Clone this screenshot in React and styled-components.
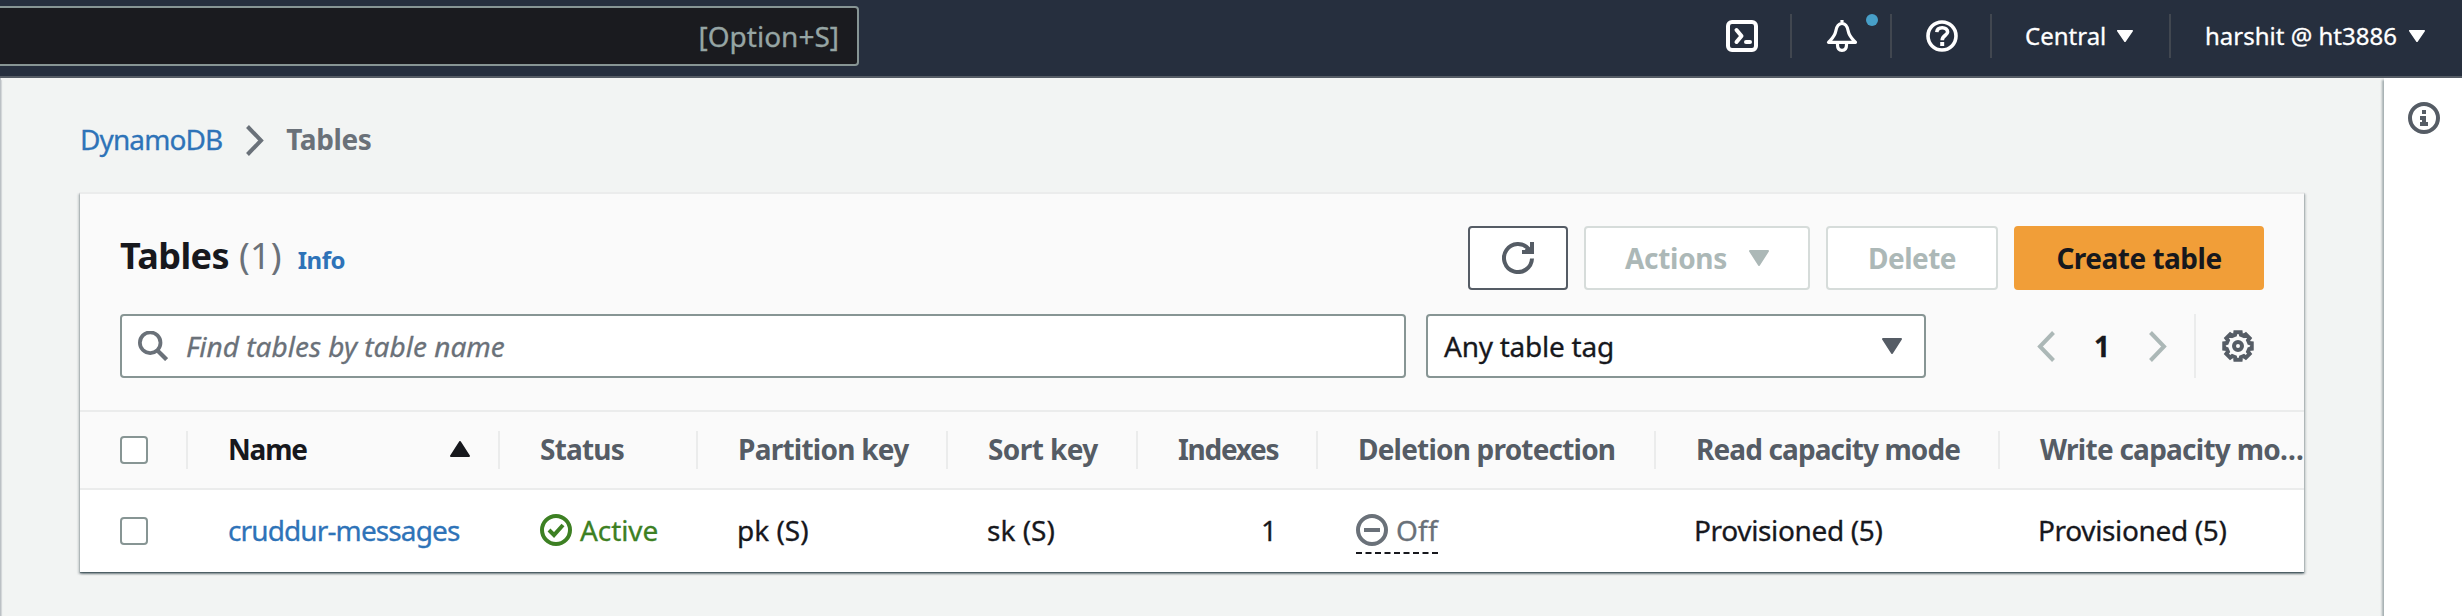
import React from 'react';
import styled, { createGlobalStyle } from 'styled-components';

const c = {
  nav: '#262f3e', navLine: '#555c65', divider: '#414750', ink: '#17181d', link: '#2e73b8',
  grey: '#6a7179', dark: '#555c65', border: '#879594', off: '#acb8b7', offLine: '#d6dcda',
  rule: '#ebecec', head: '#fafafa', page: '#f2f4f3', orange: '#f19e38', green: '#3d8023',
};

const Global = createGlobalStyle`
  *, *::before, *::after { box-sizing: border-box; }
  html, body { margin: 0; overflow: hidden; }
  body {
    font-family: "Noto Sans", "Open Sans", sans-serif;
    font-size: 28px;
    line-height: 40px;
    color: ${c.ink};
    background: ${c.page};
    -webkit-text-stroke: 0.3px;
  }
  b, h1, button { -webkit-text-stroke: 0; }
  svg { display: block; flex: none; }
`;

const Page = styled.div`
  width: 2462px;
  height: 616px;
  display: flex;
  flex-direction: column;
  overflow: hidden;
`;

const Text = styled.span`
  white-space: nowrap;
  letter-spacing: ${p => p.$track || 0}px;
  color: ${p => p.$color || 'inherit'};
`;

/* top navigation */
const Nav = styled.header`
  height: 78px;
  flex: none;
  display: flex;
  justify-content: space-between;
  background: ${c.nav};
  border-bottom: 2px solid ${c.navLine};
`;
const NavSearch = styled.div`
  width: 859px;
  height: 60px;
  margin-top: 6px;
  padding: 0 18px 0 0;
  display: flex;
  align-items: center;
  justify-content: flex-end;
  color: #96a5a4;
  background: #1a1b1f;
  border: 2px solid ${c.border};
  border-left: 0;
  border-radius: 0 4px 4px 0;
`;
const NavItems = styled.div`
  height: 72px;
  display: flex;
  align-items: center;
  color: #fff;
  font-size: 24px;
`;
const NavCell = styled.div`
  position: relative;
  width: ${p => p.$w}px;
  height: 44px;
  padding-left: ${p => p.$pad}px;
  display: flex;
  align-items: center;
  gap: ${p => p.$gap || 0}px;
  border-right: ${p => (p.$last ? 0 : 2)}px solid ${c.divider};
`;
const Dot = styled.i`
  position: absolute;
  right: 12px;
  top: 0;
  width: 12px;
  height: 12px;
  border-radius: 50%;
  background: #479fc8;
`;

/* body */
const Body = styled.div`
  flex: 1;
  display: flex;
  min-height: 0;
`;
const LeftEdge = styled.div`
  width: 1px;
  background: #bcc1c5;
  box-shadow: 1px 2px 1px #ccd0d2;
`;
const Main = styled.main`
  width: 2383px;
  padding: 41px 80px 0 79px;
`;
const Gutter = styled.aside`
  flex: 1;
  padding: 24px 0 0 24px;
  color: ${c.dark};
  background: #fff;
  box-shadow: -2px 2px 2px rgba(0, 28, 36, 0.32);
`;
const Crumbs = styled.nav`
  height: 40px;
  display: flex;
  align-items: center;
  color: ${c.grey};
`;
const Chevron = styled.span`
  margin: 0 22px 0 24px;
  padding-top: 3px;
`;
const Panel = styled.section`
  margin-top: 33px;
  height: 380px;
  width: 2224px;
  background: ${c.head};
  border-top: 2px solid ${c.rule};
  box-shadow: 0 1px 1px rgba(0, 28, 36, 0.4), 0 2px 2px rgba(0, 28, 36, 0.3),
    2px 2px 2px rgba(0, 28, 36, 0.15), -2px 2px 2px rgba(0, 28, 36, 0.15);
`;
const PanelHead = styled.div`
  height: 216px;
  padding: 32px 40px 0;
  display: flex;
  flex-direction: column;
  gap: 24px;
`;
const Line = styled.div`
  height: 64px;
  display: flex;
  align-items: center;
`;
const Heading = styled.h1`
  flex: 1;
  margin: 0;
  display: flex;
  align-items: baseline;
  font-size: 36px;
  line-height: 44px;
`;
const Count = styled(Text)`
  margin-left: 10px;
  font-weight: 400;
`;
const Info = styled(Text)`
  margin-left: 16px;
  font-size: 24px;
`;
const Buttons = styled.div`
  display: flex;
  gap: 16px;
`;
const Button = styled.button`
  width: ${p => p.$w}px;
  height: 64px;
  padding: 0 0 1px;
  display: flex;
  align-items: center;
  justify-content: center;
  gap: 22px;
  font: inherit;
  font-weight: 700;
  color: ${p => (p.$kind === 'off' ? c.off : p.$kind === 'primary' ? c.ink : c.dark)};
  background: ${p => (p.$kind === 'primary' ? c.orange : '#fff')};
  border: 2px solid ${p => (p.$kind === 'off' ? c.offLine : p.$kind === 'primary' ? c.orange : c.dark)};
  border-radius: 4px;
`;
const Field = styled.div`
  width: ${p => p.$w}px;
  height: 64px;
  padding: 0 ${p => p.$right || 0}px 0 ${p => p.$left}px;
  margin-right: 20px;
  display: flex;
  align-items: center;
  justify-content: ${p => (p.$spread ? 'space-between' : 'flex-start')};
  gap: 18px;
  background: #fff;
  border: 2px solid ${c.border};
  border-radius: 4px;
`;
const Placeholder = styled(Text)`
  font-style: italic;
`;
const Pager = styled.div`
  flex: 1;
  height: 64px;
  padding-left: 91px;
  display: flex;
  align-items: center;
  font-weight: 700;
  color: ${c.off};
`;
const PageNo = styled.span`
  width: 94px;
  text-align: center;
  color: ${c.ink};
`;
const GearSlot = styled.div`
  width: 70px;
  height: 64px;
  margin-left: auto;
  padding-left: 26px;
  display: flex;
  align-items: center;
  color: ${c.dark};
  border-left: 2px solid ${c.rule};
`;

/* table */
const Table = styled.div`
  overflow: hidden;
`;
const Row = styled.div`
  height: ${p => (p.$head ? 80 : 82)}px;
  display: flex;
  align-items: center;
  font-weight: ${p => (p.$head ? 700 : 400)};
  -webkit-text-stroke: ${p => (p.$head ? 0 : 0.3)}px;
  color: ${p => (p.$head ? c.dark : c.ink)};
  background: ${p => (p.$head ? c.head : '#fff')};
  border: solid ${c.rule};
  border-width: ${p => (p.$head ? '2px 0' : 0)};
`;
const Cell = styled.div`
  flex: none;
  width: ${p => p.$w}px;
  height: ${p => (p.$head ? 38 : 48)}px;
  padding: 0 ${p => p.$right || 0}px 2px ${p => p.$left || 40}px;
  display: flex;
  align-items: center;
  justify-content: ${p => p.$align || 'flex-start'};
  gap: 8px;
  border-right: 2px solid ${p => (p.$head && !p.$last ? c.rule : 'transparent')};
`;
const Box = styled.span`
  width: 28px;
  height: 28px;
  margin-top: 2px;
  background: #fff;
  border: 2px solid ${c.border};
  border-radius: 4px;
`;
const Dashed = styled.span`
  height: 46px;
  margin-top: 2px;
  display: flex;
  align-items: center;
  gap: 8px;
  color: ${c.grey};
  border-bottom: 2px dashed ${c.ink};
`;

const Icon = ({ size = 32, sw = 4, children }) => (
  <svg width={size} height={size} viewBox="0 0 32 32" fill="none" stroke="currentColor" strokeWidth={sw}>{children}</svg>
);
const Caret = ({ w = 16, h = 12, up }) => (
  <svg width={w} height={h} viewBox="0 0 20 16" preserveAspectRatio="none" fill="currentColor" stroke="currentColor" strokeWidth="2" strokeLinejoin="round">
    <path d={up ? 'M1 15 10 1 19 15Z' : 'M1 1 19 1 10 15Z'} />
  </svg>
);
const Angle = ({ left, w = 18, h = 31, sw = 4 }) => (
  <svg width={w} height={h} viewBox="0 0 18 31" fill="none" stroke="currentColor" strokeWidth={sw}>
    <path d={left ? 'M16.5 1.5 3 15.5 16.5 29.5' : 'M1.5 1.5 15 15.5 1.5 29.5'} />
  </svg>
);
const gearPath = (() => {
  const pts = [];
  for (let i = 0; i < 8; i++) {
    [[-15, 11.6], [-11, 14], [11, 14], [15, 11.6]].forEach(([da, r]) => {
      const a = ((i * 45 + da) * Math.PI) / 180;
      pts.push(`${(16 + r * Math.sin(a)).toFixed(2)} ${(16 - r * Math.cos(a)).toFixed(2)}`);
    });
  }
  return `M${pts.join('L')}Z`;
})();

const columns = [
  { w: 312, label: 'Name', track: -1.2, sorted: true },
  { w: 198, label: 'Status', track: -0.8 },
  { w: 250, label: 'Partition key', track: -0.75 },
  { w: 190, label: 'Sort key', track: -0.6 },
  { w: 180, label: 'Indexes', track: -1.3 },
  { w: 338, label: 'Deletion protection', track: -0.8 },
  { w: 344, label: 'Read capacity mode', track: -0.88 },
  { w: 344, label: 'Write capacity mo…', track: -0.74 },
];

export default function App() {
  return (
    <Page>
      <Global />
      <Nav>
        <NavSearch><Text>[Option+S]</Text></NavSearch>
        <NavItems>
          <NavCell $w={66}>
            <Icon><rect x="2" y="2" width="28" height="28" rx="4" /><path d="M10.5 10 15.5 16 10.5 22" strokeLinecap="round" strokeLinejoin="round" /><path d="M20 22h4" strokeLinecap="round" /></Icon>
          </NavCell>
          <NavCell $w={100} $pad={34}>
            <Icon sw={3.2}><path d="M16 3.5C12.2 3.5 10.6 6.5 9.8 11 8.8 16.500 6 18.500 2.500 22.300H29.500C26 18.500 23.200 16.500 22.200 11 21.400 6.500 19.800 3.500 16 3.500ZM16 0V3" strokeLinejoin="round" /><path d="M11.500 22.500V25C11.500 28.500 13.500 30.300 16 30.300S20.500 28.500 20.500 25V22.500" /></Icon>
            <Dot />
          </NavCell>
          <NavCell $w={100} $pad={34}>
            <Icon sw={3.6}><circle cx="16" cy="16" r="14" /><path d="M10.800 12.200C11 9.200 13 7.700 16.200 7.700S21.600 9.300 21.600 12C21.600 15.200 16.200 15.500 16.200 20.300" /><path d="M16.200 22V26" strokeWidth="4" /></Icon>
          </NavCell>
          <NavCell $w={179} $pad={33} $gap={11}><Text>Central</Text><Caret /></NavCell>
          <NavCell $w={291} $pad={34} $gap={12} $last><Text>harshit @ ht3886</Text><Caret /></NavCell>
        </NavItems>
      </Nav>
      <Body>
        <LeftEdge />
        <Main>
          <Crumbs>
            <Text $track={-0.9} $color={c.link}>DynamoDB</Text>
            <Chevron><Angle /></Chevron>
            <Text as="b" $track={-0.4}>Tables</Text>
          </Crumbs>
          <Panel>
            <PanelHead>
              <Line>
                <Heading>
                  <Text $track={-0.6}>Tables</Text>
                  <Count $color={c.grey} $track={0.2}>(1)</Count>
                  <Info $color={c.link} $track={-0.5}>Info</Info>
                </Heading>
                <Buttons>
                  <Button $w={100}>
                    <Icon><path d="M30 16.500A14 14 0 1 1 26.800 7.100" /><path d="M30 0V10H20M24 6 29 9" /></Icon>
                  </Button>
                  <Button $w={226} $kind="off"><Text $track={-0.3}>Actions</Text><Caret w={20} h={16} /></Button>
                  <Button $w={172} $kind="off"><Text $track={-0.5}>Delete</Text></Button>
                  <Button $w={250} $kind="primary"><Text $track={-0.5}>Create table</Text></Button>
                </Buttons>
              </Line>
              <Line>
                <Field $w={1286} $left={16}>
                  <Text $color={c.grey}><Icon size={30}><circle cx="13" cy="12.500" r="11" /><path d="M20.500 20.500 30.500 30.500" strokeWidth="4.500" /></Icon></Text>
                  <Placeholder $color={c.grey}>Find tables by table name</Placeholder>
                </Field>
                <Field $w={500} $left={16} $right={22} $spread>
                  <Text $track={-0.25}>Any table tag</Text>
                  <Text $color={c.dark}><Caret w={20} h={16} /></Text>
                </Field>
                <Pager>
                  <Angle left /><PageNo>1</PageNo><Angle />
                  <GearSlot><Icon><path d={gearPath} /><circle cx="16" cy="16" r="4" /></Icon></GearSlot>
                </Pager>
              </Line>
            </PanelHead>
            <Table>
              <Row $head>
                <Cell $head $w={108}><Box /></Cell>
                {columns.map((col, i) => (
                  <Cell key={col.label} $head $w={col.w} $right={col.sorted ? 28 : 0} $align={col.sorted && 'space-between'} $last={i === columns.length - 1}>
                    <Text $track={col.track} $color={col.sorted && c.ink}>{col.label}</Text>
                    {col.sorted && <Text $color={c.ink}><Caret up w={20} h={16} /></Text>}
                  </Cell>
                ))}
              </Row>
              <Row>
                <Cell $w={108}><Box /></Cell>
                <Cell $w={312}><Text $track={-0.88} $color={c.link}>cruddur-messages</Text></Cell>
                <Cell $w={198}>
                  <Text $color={c.green}><Icon><circle cx="16" cy="16" r="14" /><path d="M9 16 14 21 23 11" /></Icon></Text>
                  <Text $color={c.green} $track={-0.1}>Active</Text>
                </Cell>
                <Cell $w={250} $left={39}><Text>pk (S)</Text></Cell>
                <Cell $w={190} $left={39}><Text>sk (S)</Text></Cell>
                <Cell $w={180} $right={39} $align="flex-end">1</Cell>
                <Cell $w={338} $left={38}>
                  <Dashed><Icon><circle cx="16" cy="16" r="14" /><path d="M8 16H24" /></Icon><Text $track={0.2}>Off</Text></Dashed>
                </Cell>
                <Cell $w={344} $left={38}><Text $track={-0.35}>Provisioned (5)</Text></Cell>
                <Cell $w={344} $left={38}><Text $track={-0.35}>Provisioned (5)</Text></Cell>
              </Row>
            </Table>
          </Panel>
        </Main>
        <Gutter><Icon><circle cx="16" cy="16" r="14" /><path d="M14 8h4v4h-4zM12 14h6v6h2v4h-8v-4h2v-2h-2z" fill="currentColor" stroke="none" /></Icon></Gutter>
      </Body>
    </Page>
  );
}
